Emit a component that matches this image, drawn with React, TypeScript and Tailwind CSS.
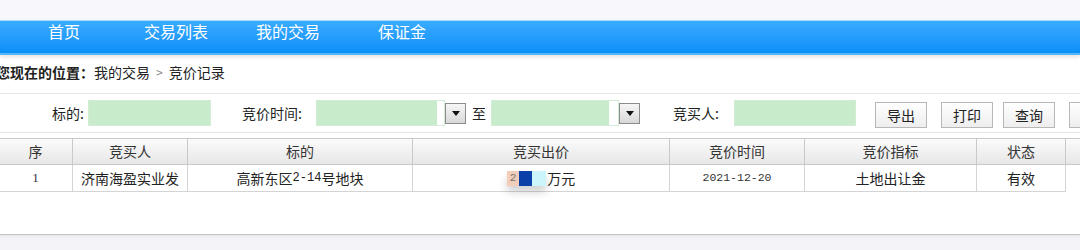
import React from 'react';

const navItems = [
  { label: '首页', ml: 'ml-[48px]' },
  { label: '交易列表', ml: 'ml-[64px]' },
  { label: '我的交易', ml: 'ml-[48px]' },
  { label: '保证金', ml: 'ml-[58px]' },
];

const columns = [
  { title: '序', w: 'w-[74px]' },
  { title: '竞买人', w: 'w-[115px]' },
  { title: '标的', w: 'w-[225px]' },
  { title: '竞买出价', w: 'w-[257px]' },
  { title: '竞价时间', w: 'w-[135px]' },
  { title: '竞价指标', w: 'w-[172px]' },
  { title: '状态', w: 'w-[89px]' },
];

const DropButton: React.FC = () => (
  <div className="w-[21px] h-[21px] shrink-0 border border-[#8c8c8c] bg-linear-to-b from-[#f6f6f6] to-[#d9d9d9] flex items-center justify-center">
    <svg width="8" height="5" viewBox="0 0 8 5">
      <path d="M0 0 L8 0 L4 5 Z" fill="#111" />
    </svg>
  </div>
);

const ActionButton: React.FC<{ label: string; ml: string }> = ({ label, ml }) => (
  <button
    className={`${ml} mt-[4px] w-[52px] h-[26px] border border-[#b8b8b8] bg-linear-to-b from-[#ffffff] to-[#eeeeee] text-[14px] text-[#222] flex items-center justify-center shrink-0`}
  >
    {label}
  </button>
);

const App: React.FC = () => {
  return (
    <div className="w-[1080px] h-[250px] overflow-hidden bg-[#f4f4f8] font-['Noto_Sans_CJK_SC',sans-serif] text-[#222]">
      <div className="h-[20px] bg-[#f8f8fc]" />

      {/* top nav */}
      <nav className="relative z-10 h-[35px] border-t border-t-[#a8dcff] border-b-2 border-b-[#52b6fb] bg-linear-to-b from-[#39abff] to-[#078ffa] flex items-start pt-[2px] text-white text-[16px] shadow-[0_2px_4px_rgba(0,0,0,0.12)]">
        {navItems.map((n) => (
          <span key={n.label} className={`${n.ml} leading-[16px] shrink-0`}>
            {n.label}
          </span>
        ))}
      </nav>

      <div className="bg-white h-[180px] border-b border-[#c4c4c4] shadow-[0_1px_3px_rgba(0,0,0,0.08)]">
        {/* breadcrumb */}
        <div className="h-[38px] flex items-center pb-[4px] text-[14px] whitespace-nowrap">
          <span className="-ml-[4px] font-bold">您现在的位置：</span>
          <span>我的交易</span>
          <span className="mx-[6px] text-[#888] text-[12px]">&gt;</span>
          <span>竞价记录</span>
        </div>

        {/* filter row */}
        <div className="h-[40px] border-y border-[#e6e6e6] flex items-center text-[14px] whitespace-nowrap">
          <span className="w-[84px] shrink-0 text-right">标的:</span>
          <div className="ml-[4px] w-[123px] h-[26px] bg-[#c8ebcc] border border-[#d3ecd6] shrink-0" />

          <span className="ml-[31px] w-[74px] shrink-0">竞价时间:</span>
          <div className="w-[129px] h-[26px] flex border border-[#d3ecd6] shrink-0">
            <div className="w-[120px] bg-[#c8ebcc]" />
            <div className="flex-1 bg-white" />
          </div>
          <DropButton />
          <span className="ml-[6px] w-[14px] shrink-0">至</span>
          <div className="ml-[5px] w-[128px] h-[26px] flex border border-[#d3ecd6] shrink-0">
            <div className="w-[117px] bg-[#c8ebcc]" />
            <div className="flex-1 bg-white" />
          </div>
          <DropButton />

          <span className="ml-[33px] w-[61px] shrink-0">竞买人:</span>
          <div className="w-[122px] h-[26px] bg-[#c8ebcc] border border-[#d3ecd6] shrink-0" />

          <ActionButton label="导出" ml="ml-[19px]" />
          <ActionButton label="打印" ml="ml-[14px]" />
          <ActionButton label="查询" ml="ml-[10px]" />
          <ActionButton label="" ml="ml-[14px]" />
        </div>

        <div className="h-[5px]" />

        {/* table header */}
        <div className="h-[27px] -ml-[1px] flex border-y border-[#c9c9c9] bg-linear-to-b from-[#fbfbfb] to-[#e7e7e7] text-[14px] text-[#333]">
          {columns.map((c) => (
            <div key={c.title} className={`${c.w} shrink-0 border-r border-[#c9c9c9] flex items-center justify-center`}>
              {c.title}
            </div>
          ))}
          <div className="flex-1" />
        </div>

        {/* data row */}
        <div className="h-[27px] -ml-[1px] flex text-[14px]">
          <div className="w-[74px] shrink-0 border-r border-b border-[#d4d4d4] flex items-center justify-center font-['Liberation_Serif',serif] text-[13px] text-[#334]">
            1
          </div>
          <div className="w-[115px] shrink-0 border-r border-b border-[#d4d4d4] flex items-center justify-center">
            济南海盈实业发
          </div>
          <div className="w-[225px] shrink-0 border-r border-b border-[#d4d4d4] flex items-center justify-center">
            高新东区<span className="font-['Liberation_Mono',monospace] text-[12px]">2-14</span>号地块
          </div>
          <div className="w-[257px] shrink-0 border-r border-b border-[#d4d4d4] flex items-center justify-center">
            <div className="flex items-center h-[15px] shadow-[0_6px_8px_rgba(0,0,0,0.18)]">
              <span className="h-[15px] px-[3px] bg-[#f2cdb9] text-[#777] text-[11px] leading-[15px] font-['Liberation_Mono',monospace]">2</span>
              <span className="w-[13px] h-[15px] bg-[#0b40a8]" />
              <span className="w-[14px] h-[15px] bg-[#cbf4fb]" />
            </div>
            <span className="ml-[1px]">万元</span>
          </div>
          <div className="w-[135px] shrink-0 border-r border-b border-[#d4d4d4] flex items-center justify-center font-['Liberation_Mono',monospace] text-[11.5px] text-[#333]">
            2021-12-20
          </div>
          <div className="w-[172px] shrink-0 border-r border-b border-[#d4d4d4] flex items-center justify-center">
            土地出让金
          </div>
          <div className="w-[89px] shrink-0 border-r border-b border-[#d4d4d4] flex items-center justify-center">
            有效
          </div>
        </div>
      </div>
    </div>
  );
};

export default App;
